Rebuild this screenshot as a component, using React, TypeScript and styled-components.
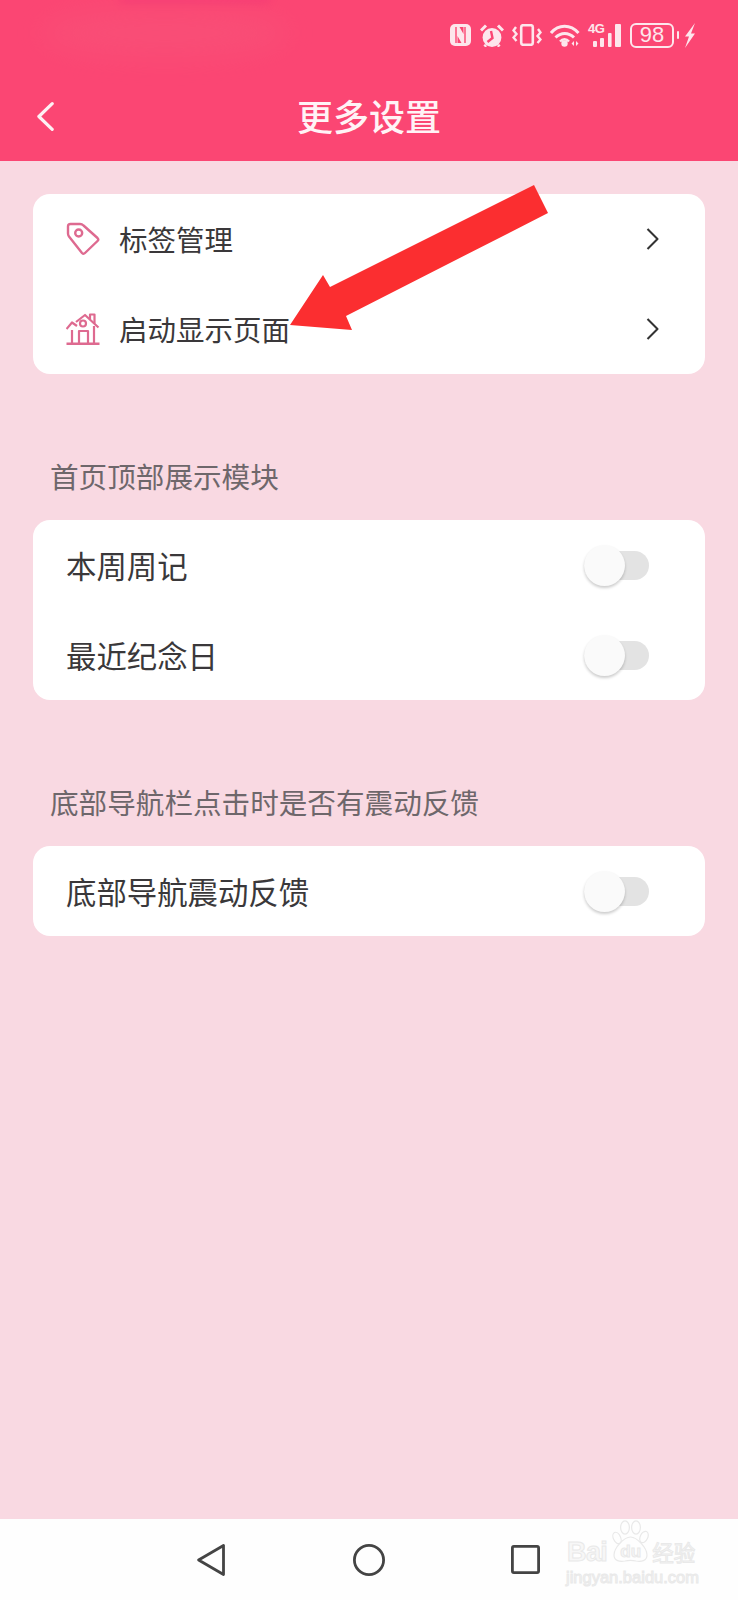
import React from "react";
import styled, { createGlobalStyle } from "styled-components";

const GlobalStyle = createGlobalStyle`
  html, body {
    margin: 0;
    padding: 0;
    background: #f9d9e2;
  }
  body {
    font-family: "Noto Sans CJK SC", "Noto Sans", sans-serif;
  }
`;

const Page = styled.div`
  position: relative;
  width: 738px;
  height: 1600px;
  overflow: hidden;
  display: flex;
  flex-direction: column;
  background: #f9d9e2;
`;

const Header = styled.header`
  position: relative;
  flex: none;
  height: 161px;
  background: #fb4673;
  overflow: hidden;
`;

const Smear = styled.div`
  position: absolute;
  left: 40px;
  top: 8px;
  width: 250px;
  height: 50px;
  border-radius: 50%;
  background: #f45f7e;
  filter: blur(14px);
  opacity: 0.3;
`;

const Streak = styled.div`
  position: absolute;
  left: 120px;
  top: -5px;
  width: 150px;
  height: 8px;
  background: #ea2c78;
  filter: blur(4px);
  opacity: 0.35;
`;

const StatusBar = styled.div`
  position: relative;
  height: 70px;
  display: flex;
  align-items: center;
  justify-content: flex-end;
  padding-right: 43px;
  gap: 8px;
  color: #fde6ec;
`;

const BatteryBox = styled.div`
  display: flex;
  align-items: center;
  justify-content: center;
  box-sizing: border-box;
  width: 44px;
  height: 25px;
  border: 2px solid #fde6ec;
  border-radius: 6px;
  font-family: "Liberation Sans", sans-serif;
  font-size: 22px;
  line-height: 1;
`;

const BatteryGroup = styled.div`
  display: flex;
  align-items: center;
  gap: 3px;
`;

const NavBar = styled.div`
  position: relative;
  height: 91px;
  display: grid;
  grid-template-columns: 1fr auto 1fr;
  align-items: center;
  padding-bottom: 2px;
  box-sizing: border-box;
`;

const BackButton = styled.div`
  display: flex;
  align-items: center;
  padding: 4px 0 0 37px;
`;

const Title = styled.h1`
  margin: 0;
  font-size: 36px;
  line-height: 44px;
  font-weight: 500;
  color: #fff3f6;
`;

const Content = styled.main`
  flex: 1;
  display: flex;
  flex-direction: column;
  padding: 33px 33px 0;
`;

const Card = styled.section`
  background: #ffffff;
  border-radius: 17px;
  display: flex;
  flex-direction: column;
`;

const Row = styled.div`
  height: 90px;
  display: flex;
  align-items: center;
  padding: 0 33px;
`;

const RowIcon = styled.div`
  flex: none;
  width: 34px;
  margin-right: 19px;
  display: flex;
  align-items: center;
  justify-content: center;
`;

const RowLabel = styled.span<{ $large?: boolean }>`
  flex: 1;
  font-size: ${(p) => (p.$large ? 30.4 : 28.5)}px;
  line-height: 40px;
  color: #3a383a;
`;

const SectionLabel = styled.div`
  margin: 83px 0 23px 17px;
  font-size: 28.6px;
  line-height: 38px;
  padding-bottom: 2px;
  color: #6e676b;
`;

const ChevronSlot = styled.div`
  flex: none;
  display: flex;
  margin-right: 13px;
`;

const Toggle = styled.div`
  position: relative;
  flex: none;
  width: 65px;
  height: 29px;
  margin-right: 23px;
  border-radius: 15px;
  background: #e3e3e3;
`;

const Thumb = styled.div`
  position: absolute;
  left: 0;
  top: -6px;
  width: 41px;
  height: 41px;
  border-radius: 50%;
  background: #fafafa;
  box-shadow: 0 2px 3px rgba(0, 0, 0, 0.2);
`;

const BottomNav = styled.nav`
  position: relative;
  flex: none;
  height: 81px;
  background: #fefefe;
  display: flex;
  align-items: center;
`;

const NavSlot = styled.div<{ $left: number }>`
  margin-left: ${(p) => p.$left}px;
  display: flex;
`;

const Watermark = styled.div`
  position: absolute;
  left: 567px;
  top: 0;
  width: 170px;
  height: 78px;
  color: #f7f7f7;
  -webkit-text-stroke: 1px #e9e9e9;
  font-family: "Liberation Sans", sans-serif;
`;

const MarkLine = styled.div`
  position: absolute;
  left: 0;
  top: 22px;
  display: flex;
  align-items: center;
  height: 22px;
  white-space: nowrap;
`;

const MarkBai = styled.span`
  font-size: 27px;
  line-height: 22px;
  font-weight: 700;
  letter-spacing: -0.6px;
`;

const MarkDu = styled.span`
  position: relative;
  width: 37px;
  margin-left: 5px;
  text-align: center;
  font-size: 17px;
  line-height: 22px;
  font-weight: 700;
`;

const MarkCn = styled.span`
  margin-left: 3px;
  font-family: "Noto Sans CJK SC", sans-serif;
  font-size: 21.5px;
  line-height: 22px;
`;

const MarkUrl = styled.div`
  position: absolute;
  left: -1px;
  top: 49px;
  font-size: 16.5px;
  line-height: 18px;
  white-space: nowrap;
`;

const Paw = styled.svg`
  position: absolute;
  left: 0;
  top: -21px;
`;

const Arrow = styled.svg`
  position: absolute;
  left: 0;
  top: 0;
  pointer-events: none;
`;

const Signal = styled.div`
  position: relative;
  width: 34px;
  height: 23px;
`;

const SignalLabel = styled.span`
  position: absolute;
  left: 0;
  top: -1px;
  font-family: "Liberation Sans", sans-serif;
  font-size: 13px;
  font-weight: 700;
  line-height: 12px;
  letter-spacing: -0.6px;
  color: #fde6ec;
`;

const NfcIcon = () => (
  <svg width="22" height="22" viewBox="0 0 22 22">
    <rect x="0" y="0" width="21" height="22" rx="5" fill="currentColor" />
    <path d="M6 3 V19 M15 3 V19" stroke="#fb4673" strokeWidth="1.4" />
    <path d="M9.5 3 H13.5 V10 Z M7.5 12 L11.5 19 H7.5 Z" fill="#fb4673" />
  </svg>
);

const AlarmIcon = () => (
  <svg width="24" height="23" viewBox="0 0 24 23" fill="currentColor">
    <circle cx="12" cy="13.5" r="9.4" />
    <path d="M1 6.5 L6 1.5 M23 6.5 L18 1.5 M6 21 L4.5 22.5 M18 21 L19.5 22.5" stroke="currentColor" strokeWidth="3" />
    <path d="M11 7 L12.5 14 L7.5 18" stroke="#fb4673" strokeWidth="2.4" fill="none" />
  </svg>
);

const VibrateIcon = () => (
  <svg width="30" height="22" viewBox="0 0 30 22" fill="none" stroke="currentColor" strokeWidth="2.4">
    <rect x="9.2" y="1.2" width="11.6" height="19.6" rx="2" strokeWidth="2.6" />
    <path d="M4 3 L1.5 6.5 L4.5 10 L1.5 13.5 L4.5 17" />
    <path d="M26 5 L28.5 8.5 L25.5 12 L28.5 15.5 L25.5 19" />
  </svg>
);

const WifiIcon = () => (
  <svg width="30" height="23" viewBox="0 0 30 23" fill="none" stroke="currentColor" strokeWidth="3">
    <path d="M1 9 C8.5 0 20.5 0 28.5 9" />
    <path d="M5.5 13.5 C11 8 18.5 8 24 13.5" />
    <path d="M10 17.5 C12.5 14.5 16.5 14.5 19 17.5" strokeWidth="2.4" />
    <circle cx="14.5" cy="19.5" r="3.2" fill="currentColor" stroke="none" />
    <path d="M24 17 L21.5 19.5 L24 22 Z M26 17 L28.5 19.5 L26 22 Z" fill="currentColor" stroke="none" />
  </svg>
);

const SignalBars = () => (
  <svg width="34" height="23" viewBox="0 0 34 23" fill="currentColor">
    <rect x="5" y="17" width="4" height="6" rx="1" />
    <rect x="12" y="14" width="4" height="9" rx="1" />
    <rect x="20" y="9" width="3.6" height="14" rx="1" />
    <rect x="27" y="0" width="6" height="23" rx="1" />
  </svg>
);

const BatteryNub = () => (
  <svg width="2" height="8" viewBox="0 0 2 8" fill="currentColor">
    <rect width="2" height="8" rx="1" />
  </svg>
);

const BoltIcon = () => (
  <svg width="13" height="25" viewBox="0 0 13 25" fill="currentColor">
    <path d="M13 0 L3 13.5 H7 L3 25 L13 10.5 H9 Z" />
  </svg>
);

const BackIcon = () => (
  <svg width="17" height="29" viewBox="0 0 17 29" fill="none" stroke="#fdf1f4" strokeWidth="3.2" strokeLinecap="round" strokeLinejoin="round">
    <path d="M15.2 1.7 L1.9 14.5 L15.2 27.3" />
  </svg>
);

const TagIcon = () => (
  <svg width="34" height="34" viewBox="0 0 34 34" fill="none" stroke="#de6a90" strokeWidth="2.4" strokeLinejoin="round">
    <path d="M2 4.5 Q2 2 4.5 2 L14 2 Q16 2 17.5 3.5 L31.5 16 Q33 17.5 31.5 19 L19 31 Q17.5 32.5 16 31 L3 14.5 Q2 13 2 11.5 Z" />
    <circle cx="12.7" cy="11" r="3.5" />
  </svg>
);

const HouseIcon = () => (
  <svg width="34" height="32" viewBox="0 0 34 32" fill="none" stroke="#de6a90" strokeWidth="2.2" strokeLinejoin="round">
    <path d="M0.5 30.7 H33.5" strokeWidth="2.6" />
    <path d="M0.5 16 L6 9.5 L11 13" />
    <path d="M6 17 V31" />
    <path d="M10 9 L19 2 L32.5 14.5" />
    <path d="M24 6 V1.5 H28.5 V10.5" />
    <path d="M28 13 V31" />
    <path d="M13 31 V18 H22 V31" />
    <circle cx="17" cy="10.5" r="3" />
  </svg>
);

const ChevronIcon = () => (
  <svg width="13" height="22" viewBox="0 0 13 22" fill="none" stroke="#333333" strokeWidth="2.1" strokeLinejoin="round">
    <path d="M1.5 1 L11.5 11 L1.5 21" />
  </svg>
);

const NavBackIcon = () => (
  <svg width="28" height="32" viewBox="0 0 28 32" fill="none" stroke="#444444" strokeWidth="2.8" strokeLinejoin="round">
    <path d="M26.5 1.5 V30.5 L1.6 16 Z" />
  </svg>
);

const NavHomeIcon = () => (
  <svg width="32" height="32" viewBox="0 0 32 32" fill="none" stroke="#444444" strokeWidth="2.8">
    <circle cx="16" cy="16" r="14.6" />
  </svg>
);

const NavRecentIcon = () => (
  <svg width="29" height="29" viewBox="0 0 29 29" fill="none" stroke="#444444" strokeWidth="2.8" strokeLinejoin="round">
    <rect x="1.4" y="1.4" width="26.2" height="26.2" rx="1.5" />
  </svg>
);

const PawIcon = () => (
  <Paw width="37" height="43" viewBox="0 0 37 43" fill="none" stroke="#e9e9e9" strokeWidth="1.2">
    <ellipse cx="5" cy="18" rx="3.6" ry="6" transform="rotate(-25 5 18)" />
    <ellipse cx="13" cy="7.5" rx="4.4" ry="6.6" />
    <ellipse cx="24" cy="7.5" rx="4.4" ry="6.6" />
    <ellipse cx="32" cy="17" rx="3.8" ry="6" transform="rotate(25 32 17)" />
    <path d="M18.5 17 C12 17 2 28 2 35 C2 41 8 42 13 41 C17 40 20 40 24 41 C29 42 35 41 35 35 C35 28 25 17 18.5 17 Z" />
  </Paw>
);

const App = (): JSX.Element => {
  return (
    <React.Fragment>
      <GlobalStyle />
      <Page>
        <Header>
          <Smear />
          <Streak />
          <StatusBar>
            <NfcIcon />
            <AlarmIcon />
            <VibrateIcon />
            <WifiIcon />
            <Signal>
              <SignalBars />
              <SignalLabel>4G</SignalLabel>
            </Signal>
            <BatteryGroup>
              <BatteryBox>98</BatteryBox>
              <BatteryNub />
              <BoltIcon />
            </BatteryGroup>
          </StatusBar>
          <NavBar>
            <BackButton>
              <BackIcon />
            </BackButton>
            <Title>更多设置</Title>
          </NavBar>
        </Header>

        <Content>
          <Card>
            <Row>
              <RowIcon>
                <TagIcon />
              </RowIcon>
              <RowLabel>标签管理</RowLabel>
              <ChevronSlot>
                <ChevronIcon />
              </ChevronSlot>
            </Row>
            <Row>
              <RowIcon>
                <HouseIcon />
              </RowIcon>
              <RowLabel>启动显示页面</RowLabel>
              <ChevronSlot>
                <ChevronIcon />
              </ChevronSlot>
            </Row>
          </Card>

          <SectionLabel>首页顶部展示模块</SectionLabel>
          <Card>
            <Row>
              <RowLabel $large>本周周记</RowLabel>
              <Toggle>
                <Thumb />
              </Toggle>
            </Row>
            <Row>
              <RowLabel $large>最近纪念日</RowLabel>
              <Toggle>
                <Thumb />
              </Toggle>
            </Row>
          </Card>

          <SectionLabel>底部导航栏点击时是否有震动反馈</SectionLabel>
          <Card>
            <Row>
              <RowLabel $large>底部导航震动反馈</RowLabel>
              <Toggle>
                <Thumb />
              </Toggle>
            </Row>
          </Card>
        </Content>

        <BottomNav>
          <NavSlot $left={197}>
            <NavBackIcon />
          </NavSlot>
          <NavSlot $left={128}>
            <NavHomeIcon />
          </NavSlot>
          <NavSlot $left={126}>
            <NavRecentIcon />
          </NavSlot>
          <Watermark>
            <MarkLine>
              <MarkBai>Bai</MarkBai>
              <MarkDu>
                <PawIcon />
                du
              </MarkDu>
              <MarkCn>经验</MarkCn>
            </MarkLine>
            <MarkUrl>jingyan.baidu.com</MarkUrl>
          </Watermark>
        </BottomNav>

        <Arrow width="738" height="1600" viewBox="0 0 738 1600">
          <polygon points="534,185 548,213 346,316 352,330 290,325 323,275 330,287" fill="#fb2e30" />
        </Arrow>
      </Page>
    </React.Fragment>
  );
};

export default App;
